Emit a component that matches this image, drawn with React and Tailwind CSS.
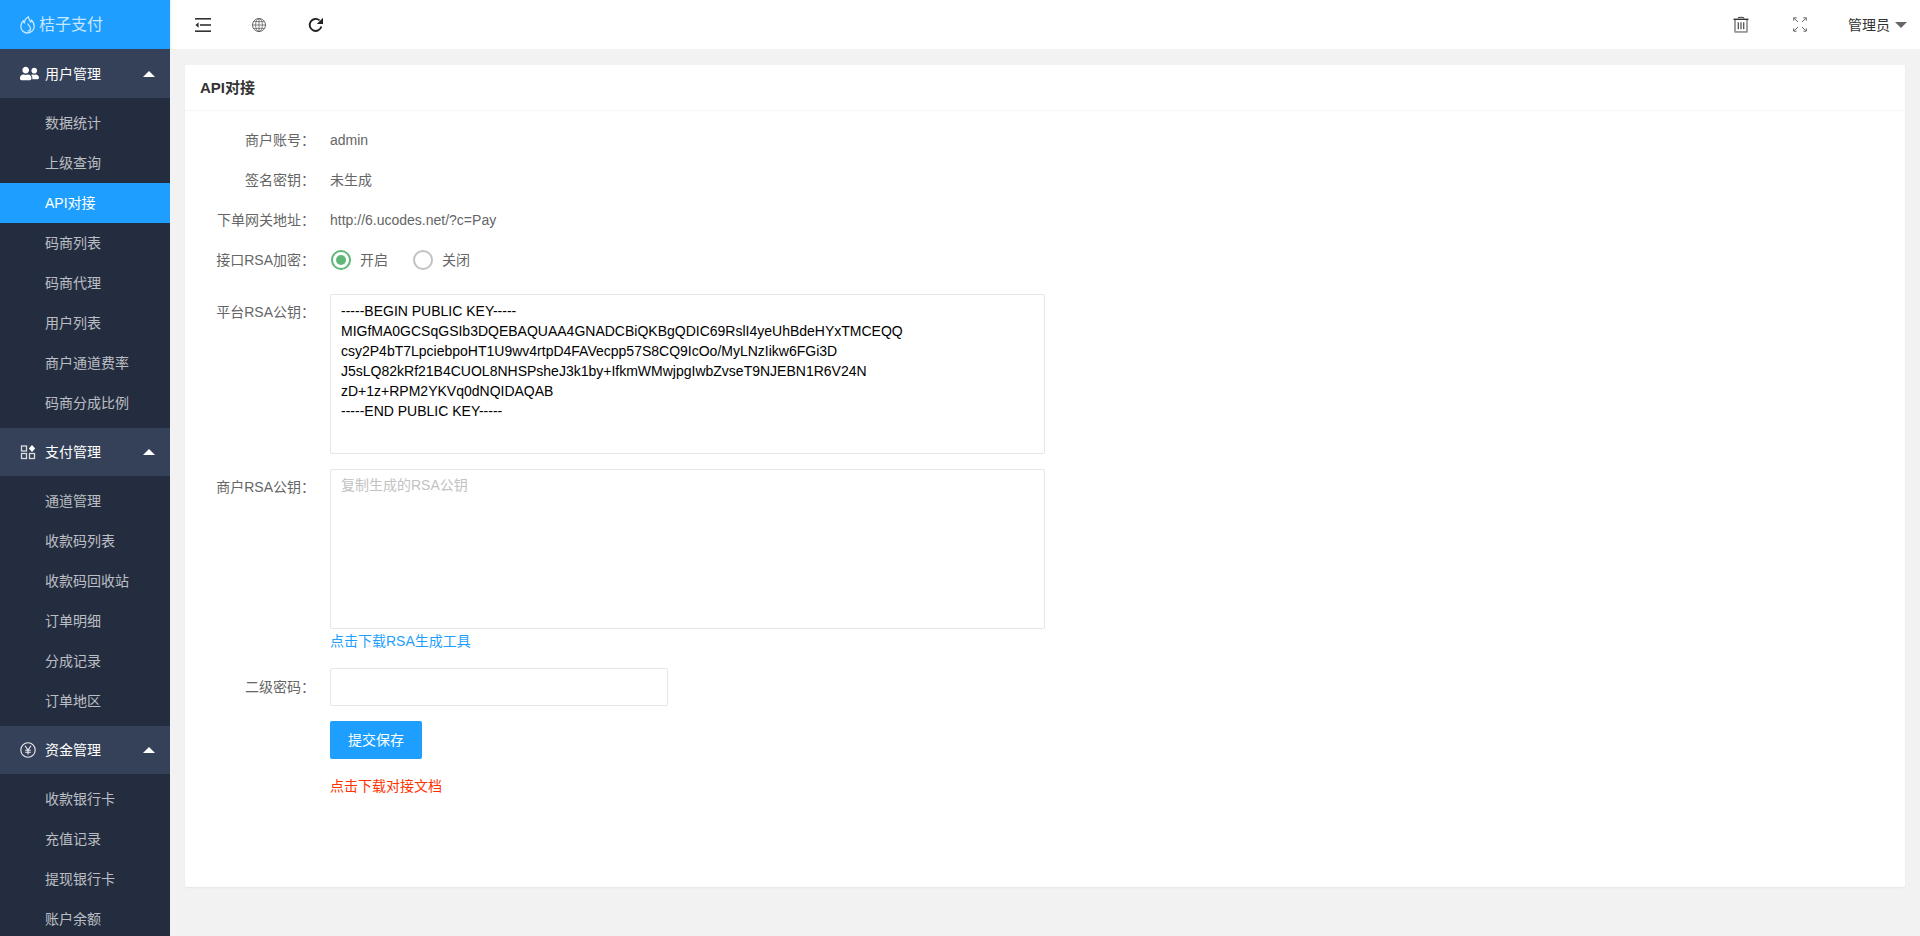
import { FaUserFriends } from "react-icons/fa";

const groups = [
  {
    title: "用户管理",
    icon: <FaUserFriends className="w-[19px] h-[19px] text-white" />,
    items: ["数据统计", "上级查询", "API对接", "码商列表", "码商代理", "用户列表", "商户通道费率", "码商分成比例"],
  },
  {
    title: "支付管理",
    icon: <AppsIcon />,
    items: ["通道管理", "收款码列表", "收款码回收站", "订单明细", "分成记录", "订单地区"],
  },
  {
    title: "资金管理",
    icon: <YenIcon />,
    items: ["收款银行卡", "充值记录", "提现银行卡", "账户余额"],
  },
];

const rsaKey = `-----BEGIN PUBLIC KEY-----
MIGfMA0GCSqGSIb3DQEBAQUAA4GNADCBiQKBgQDIC69RslI4yeUhBdeHYxTMCEQQ
csy2P4bT7LpciebpoHT1U9wv4rtpD4FAVecpp57S8CQ9IcOo/MyLNzIikw6FGi3D
J5sLQ82kRf21B4CUOL8NHSPsheJ3k1by+IfkmWMwjpgIwbZvseT9NJEBN1R6V24N
zD+1z+RPM2YKVq0dNQIDAQAB
-----END PUBLIC KEY-----`;

function FlameIcon() {
  return (
    <svg width="15" height="18" viewBox="0 0 15 18" fill="none" stroke="currentColor" strokeWidth="1.3" strokeLinejoin="round">
      <path d="M8.500 .8c-.2 2.400 1.700 3.600 2.100 5.400.6-.6.900-1.400.9-2.200 1.500 1.600 2.700 3.800 2.700 6.200 0 3.800-3 6.800-6.800 6.800S.8 14 .8 10.200C.8 7.800 2 6 3.400 4.600c0 1 .3 1.800.9 2.400C4.500 4.800 6 2.200 8.500.8z" />
      <path d="M7.800 7.500c.2 1.500 2.700 2.800 2.700 5.200 0 1.400-1.100 2.300-2.800 2.300" />
    </svg>
  );
}

function AppsIcon() {
  return (
    <svg width="16" height="16" viewBox="0 0 16 16" fill="none" stroke="#ddd" strokeWidth="1.3">
      <rect x="1.500" y="2" width="5" height="5" />
      <rect x="1.500" y="9.500" width="5" height="5" />
      <rect x="9.500" y="9.500" width="5" height="5" />
      <path d="M12 1l3.200 3.500L12 8 8.800 4.500z" fill="#fff" stroke="none" />
    </svg>
  );
}

function YenIcon() {
  return (
    <svg width="16" height="16" viewBox="0 0 16 16" fill="none" stroke="#eee" strokeWidth="1.1">
      <circle cx="8" cy="8" r="7.200" />
      <path d="M5 3.800L8 8l3-4.200M8 8v4.500M5.200 8.300h5.600M5.200 10.300h5.600" />
    </svg>
  );
}

function IndentIcon() {
  return (
    <svg width="16" height="14" viewBox="0 0 16 14" fill="#333">
      <rect x="0" y="0" width="16" height="1.600" />
      <rect x="0" y="12.400" width="16" height="1.600" />
      <rect x="5" y="6.200" width="11" height="1.600" />
      <path d="M3.600 4.200v5.600L0.400 7z" />
    </svg>
  );
}

function GlobeIcon() {
  return (
    <svg width="14" height="14" viewBox="0 0 14 14" fill="none" stroke="#555" strokeWidth="0.7">
      <circle cx="7" cy="7" r="6.500" strokeWidth="0.9" />
      <ellipse cx="7" cy="7" rx="3.400" ry="6.500" />
      <path d="M7 .5v13M.5 7h13M1.500 3.600h11M1.500 10.400h11" />
    </svg>
  );
}

function RefreshIcon() {
  return (
    <svg width="16" height="16" viewBox="0 0 16 16" fill="none">
      <path d="M13.400 9.600A6 6 0 1 1 11.600 3.400" stroke="#222" strokeWidth="1.900" />
      <path d="M15 .8v6.200H8.800z" fill="#222" />
    </svg>
  );
}

function TrashIcon() {
  return (
    <svg width="16" height="17" viewBox="0 0 16 17" fill="none">
      <path d="M5 2.200C5.500 .9 10.500 .9 11 2.200" stroke="#444" strokeWidth="1.100" />
      <path d="M.5 3.300h15" stroke="#333" strokeWidth="1.400" />
      <path d="M2 4v11.900h12V4" stroke="#555" strokeWidth="1.100" />
      <path d="M2 15.900h12" stroke="#aaa" strokeWidth="1.200" />
      <path d="M5.300 6.200v7M8 6.200v7M10.700 6.200v7" stroke="#555" strokeWidth="1.300" />
    </svg>
  );
}

function ExpandIcon() {
  return (
    <svg width="14" height="15" viewBox="0 0 14 15" fill="none" stroke="#666" strokeWidth="1">
      <path d="M1.200 1.300L5 5M12.800 1.300L9 5M1.200 13.700L5 10M12.800 13.700L9 10" />
      <path d="M.7 3.600V.8h2.900M10.400.8h2.900v2.800M.7 11.400v2.800h2.900M10.400 14.200h2.900v-2.800" />
    </svg>
  );
}

function Row({ label, children, className = "h-10 items-center", labelClass = "" }) {
  return (
    <div className={"flex gap-[15px] " + className}>
      <label className={"w-[130px] shrink-0 text-right text-[#666] " + labelClass}>{label}</label>
      {children}
    </div>
  );
}

function Radio({ on, label }) {
  return (
    <div className="flex items-center gap-[9px]">
      <span className={"w-5 h-5 rounded-full border-2 flex items-center justify-center " + (on ? "border-[#5fb878]" : "border-[#c2c2c2]")}>
        {on && <span className="w-2.5 h-2.5 rounded-full bg-[#5fb878]" />}
      </span>
      <span className="text-[#666]">{label}</span>
    </div>
  );
}

export default function App() {
  return (
    <div className="flex h-[936px] overflow-hidden bg-[#f2f2f2] text-sm font-['Liberation_Sans','Noto_Sans_CJK_SC',sans-serif]">
      <aside className="relative z-10 w-[170px] shrink-0 bg-[#242d3f] overflow-hidden">
        <div className="h-[49px] bg-[#1e9fff] flex items-center pl-[20px] gap-[4px] text-base text-white/75">
          <FlameIcon />
          <span>桔子支付</span>
        </div>
        {groups.map((g, i) => (
          <div key={g.title}>
            <div className={"bg-[#354059] flex items-center pl-5 pr-[15px] text-white " + (i === 0 ? "h-[49px]" : "h-[48px]")}>
              <span className="w-[25px] flex">{g.icon}</span>
              <span className="flex-1">{g.title}</span>
              <span className="w-0 h-0 border-x-[6px] border-x-transparent border-b-[6px] border-b-white" />
            </div>
            <ul className="py-[5px]">
              {g.items.map((item) => (
                <li
                  key={item}
                  className={"h-10 flex items-center pl-[45px] " + (item === "API对接" ? "bg-[#1e9fff] text-white" : "text-white/70")}
                >
                  {item}
                </li>
              ))}
            </ul>
          </div>
        ))}
      </aside>

      <div className="flex-1 min-w-0 flex flex-col">
        <header className="h-[49px] shrink-0 bg-white flex items-center pl-[25px] pr-[13px] text-[#333] shadow-[inset_2px_0_2px_-1px_rgba(0,0,0,0.08)]">
          <IndentIcon />
          <span className="ml-[41px]"><GlobeIcon /></span>
          <span className="ml-[42px]"><RefreshIcon /></span>
          <div className="ml-auto flex items-center">
            <TrashIcon />
            <span className="ml-[44px]"><ExpandIcon /></span>
            <span className="ml-[41px]">管理员</span>
            <span className="ml-[5px] w-0 h-0 border-x-[6px] border-x-transparent border-t-[6px] border-t-[#666]" />
          </div>
        </header>

        <main className="mt-4 mx-[15px] h-[822px] bg-white rounded-[2px] shadow-[0_1px_2px_rgba(0,0,0,0.05)]">
          <div className="h-[46px] border-b border-[#f6f6f6] flex items-center px-[15px] text-[15px] font-bold text-[#333]">API对接</div>
          <form className="pt-[9px]">
            <Row label="商户账号：">
              <span className="text-[#666]">admin</span>
            </Row>
            <Row label="签名密钥：">
              <span className="text-[#666]">未生成</span>
            </Row>
            <Row label="下单网关地址：">
              <span className="text-[#666]">http://6.ucodes.net/?c=Pay</span>
            </Row>
            <Row label="接口RSA加密：">
              <div className="flex items-center gap-[25px] pl-px">
                <Radio on label="开启" />
                <Radio label="关闭" />
              </div>
            </Row>
            <Row label="平台RSA公钥：" className="mt-3.5 leading-5" labelClass="pt-[8px]">
              <textarea
                readOnly
                defaultValue={rsaKey}
                className="w-[715px] h-[160px] border border-[#e6e6e6] rounded-[2px] px-2.5 pt-[6px] leading-5 text-black resize-none outline-none"
              />
            </Row>
            <Row label="商户RSA公钥：" className="mt-[15px] leading-5" labelClass="pt-[8px]">
              <textarea
                placeholder="复制生成的RSA公钥"
                className="w-[715px] h-[160px] border border-[#e6e6e6] rounded-[2px] px-2.5 pt-[5px] leading-5 resize-none outline-none placeholder:text-[#c2c2c2]"
              />
            </Row>
            <div className="pl-[145px] mt-[2px] leading-5 text-[#1e9fff]">
              <a>点击下载RSA生成工具</a>
            </div>
            <Row label="二级密码：" className="mt-[17px] h-[38px] items-center">
              <input type="password" className="w-[338px] h-[38px] border border-[#e6e6e6] rounded-[2px] outline-none px-2.5" />
            </Row>
            <div className="pl-[145px] mt-[15px]">
              <button type="button" className="w-[92px] h-[38px] bg-[#1e9fff] text-white rounded-[2px]">提交保存</button>
            </div>
            <div className="pl-[145px] mt-[17px] leading-5 text-[#ff3300]">
              <a>点击下载对接文档</a>
            </div>
          </form>
        </main>
      </div>
    </div>
  );
}
